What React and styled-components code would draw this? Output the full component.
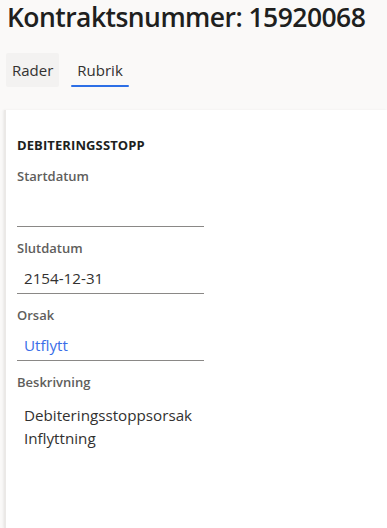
import styled, { createGlobalStyle } from 'styled-components';

const Global = createGlobalStyle`
    html, body {
        margin: 0;
        padding: 0;
        background: #faf9f8;
        font-family: "Open Sans", "Noto Sans", sans-serif;
        color: #323130;
    }
`

const Page = styled.div`
    width: 387px;
    height: 528px;
    overflow: hidden;
    display: flex;
    flex-direction: column;
`

const Title = styled.h1`
    margin: 0;
    padding: 0 0 0 7px;
    font-size: 26.5px;
    font-weight: 600;
    line-height: 34px;
    color: #201f1e;
    letter-spacing: -0.55px;
    white-space: nowrap;
`

const Tabs = styled.div`
    display: flex;
    align-items: stretch;
    gap: 12px;
    padding: 19px 0 0 6px;
    height: 34px;
`

const Tab = styled.div`
    position: relative;
    display: flex;
    align-items: center;
    padding: 0 6px;
    font-size: 15px;
    color: #323130;
    border-radius: 2px;
    background: ${p => p.$plain ? '#f3f2f1' : 'transparent'};

    &::after {
        content: '';
        display: ${p => p.$active ? 'block' : 'none'};
        position: absolute;
        left: 0; right: 0; bottom: 0;
        height: 2px;
        background: #2d6fe6;
        border-radius: 1px;
    }
`

const Card = styled.div`
    flex: 1;
    margin: 23px 0 0 4px;
    background: #fff;
    border-left: 2px solid #ebe9e7;
    box-shadow: -1px 0 2px rgba(0,0,0,0.06);
    padding: 27px 0 0 11px;
`

const Section = styled.div`
    font-size: 13px;
    font-weight: 700;
    color: #201f1e;
    line-height: 16px;
    letter-spacing: 0.1px;
    margin-bottom: 14px;
`

const Field = styled.div`
    width: 187px;
    margin-bottom: ${p => p.$last ? '0' : '12px'};
`

const Label = styled.div`
    font-size: 13px;
    font-weight: 600;
    color: #605e5c;
    line-height: 18px;
`

const Value = styled.div`
    padding: ${p => p.$line ? '10px 7px 3px' : '13px 7px 0'};
    font-size: 15.2px;
    line-height: 23px;
    min-height: ${p => p.$empty ? '28px' : '23px'};
    color: ${p => p.$link ? '#3a6ee8' : '#323130'};
    border-bottom: ${p => p.$line ? '1px solid #8a8886' : 'none'};
`

export default function App() {
    return (
        <Page>
            <Global />
            <Title>Kontraktsnummer: 15920068</Title>
            <Tabs>
                <Tab $plain>Rader</Tab>
                <Tab $active>Rubrik</Tab>
            </Tabs>
            <Card>
                <Section>DEBITERINGSSTOPP</Section>
                <Field>
                    <Label>Startdatum</Label>
                    <Value $line $empty></Value>
                </Field>
                <Field>
                    <Label>Slutdatum</Label>
                    <Value $line>2154-12-31</Value>
                </Field>
                <Field>
                    <Label>Orsak</Label>
                    <Value $line $link>Utflytt</Value>
                </Field>
                <Field $last>
                    <Label>Beskrivning</Label>
                    <Value>Debiteringsstoppsorsak<br />Inflyttning</Value>
                </Field>
            </Card>
        </Page>
    )
}
